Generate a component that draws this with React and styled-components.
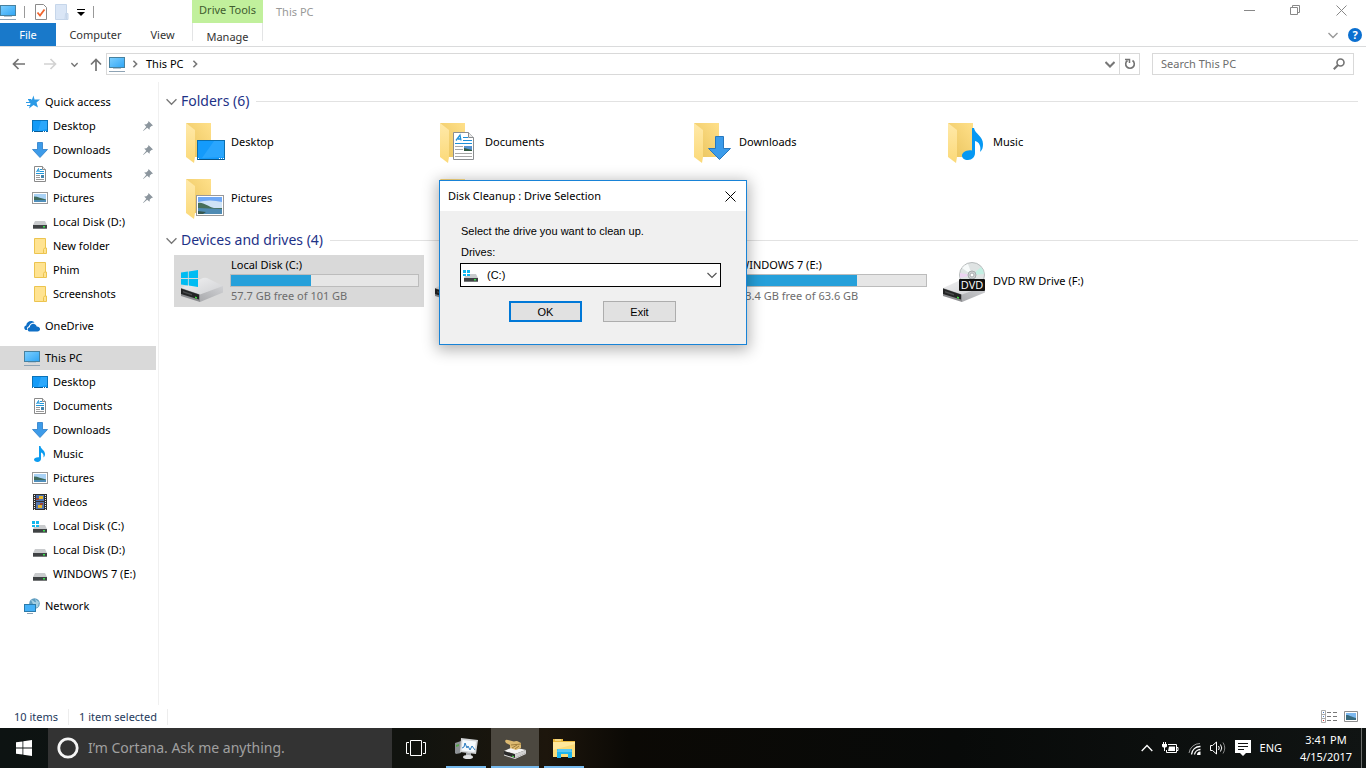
import { useState } from "react";
import styled, { createGlobalStyle } from "styled-components";

const PcIcon = ({ size = 16 }) => (
  <svg width={size} height={size} viewBox="0 0 16 16">
    <defs>
      <linearGradient id="screen" x1="0" y1="0" x2="1" y2="1">
        <stop offset="0" stopColor="#7ed0ff" />
        <stop offset="1" stopColor="#2fa5f5" />
      </linearGradient>
    </defs>
    <rect x="0.5" y="1.5" width="15" height="10" fill="url(#screen)" stroke="#47819f" />
    <path d="M4 13h8v-1H4z" fill="#b5c5d2" />
    <path d="M0 15.5h16" stroke="#8ea3b4" />
  </svg>
);

const DesktopIcon = () => (
  <svg width="16" height="16" viewBox="0 0 16 16">
    <rect x="0.5" y="2.5" width="15" height="11" fill="#139bf8" stroke="#0a72b8" />
    <path d="M9 3h6v8L6 13z" fill="#3cb0ff" opacity="0.6" />
    <path d="M1 13.5h14" stroke="#075a94" />
    <path d="M1 13.5h1M11 13.5h1M13 13.5h1" stroke="#fff" />
  </svg>
);

const DownloadIcon = () => (
  <svg width="16" height="16" viewBox="0 0 16 16">
    <path d="M5.5.5h5v7h5L8 15.5.5 7.5h5z" fill="#3d9be9" stroke="#2b7cc7" strokeWidth="0.8" />
  </svg>
);

const DocumentIcon = () => (
  <svg width="16" height="16" viewBox="0 0 16 16">
    <path d="M2.5.5h8l3 3v12h-11z" fill="#fff" stroke="#8a8a8a" />
    <path d="M10.5.5v3h3" fill="#eee" stroke="#8a8a8a" />
    <path d="M4.500 6l2-3.500.8 3.500M5 5h2M8 3.5h2M8 5.5h4M4 7.5h8" stroke="#2196d8" fill="none" />
    <path d="M4 9.5h4M4 11.5h4M4 13.5h8" stroke="#999" />
    <rect x="9" y="9" width="3" height="3" fill="#4585ac" />
  </svg>
);

const PictureIcon = () => (
  <svg width="16" height="16" viewBox="0 0 16 16">
    <rect x="0.5" y="2.5" width="15" height="11" fill="#fff" stroke="#999" />
    <path d="M2 4h12v8H2z" fill="#a9d2f5" />
    <path d="M2 6.500c4 0 7 2 12 3v1H2z" fill="#3e6a5c" />
    <path d="M2 10h12v2H2z" fill="#4f8fba" />
  </svg>
);

const MusicIcon = () => (
  <svg width="16" height="16" viewBox="0 0 16 16">
    <path d="M7 0h1.500c0 3 4.500 4 4.500 8 0 1.500-.5 2.500-1.500 3.500.6-3-1-4.500-2.500-5V13c0 1.500-1.500 3-3.500 3S2 15 2 13.500 4 11 7 11.200z" fill="#0c9cf0" />
  </svg>
);

const VideoIcon = () => (
  <svg width="16" height="16" viewBox="0 0 16 16">
    <path d="M1 0h14v16H1z" fill="#303030" />
    <path d="M2.5 1v15M13.5 1v15" stroke="#eee" strokeDasharray="1 1" />
    <path d="M4 1h8v6H4z" fill="#496fb0" />
    <path d="M4 8h8v7H4z" fill="#5375ae" />
    <path d="M7 2h4v3H7zM6 11h4v3H6z" fill="#e6b62b" />
    <path d="M4 4h3v2H4zM8 9h3v2H8z" fill="#97443b" />
  </svg>
);

const FolderIcon = () => (
  <svg width="16" height="16" viewBox="0 0 16 16">
    <path d="M2.5.5h11v15h-11z" fill="#ffe391" stroke="#ecc44f" />
    <path d="M12.5 10h2v5.5h-3v-4z" fill="#ffe391" stroke="#ecc44f" />
  </svg>
);

const WindowsMark = ({ x, y, size, color = "#00bcf2" }) => (
  <svg x={x} y={y} width={size} height={size} viewBox="0 0 16 16">
    <path
      d="M0 2.3 6.5 1.4V7.6H0zM7.3 1.3 16 0v7.6H7.3zM0 8.4h6.5v6.2L0 13.7zM7.3 8.4H16V16l-8.7-1.3z"
      fill={color}
    />
  </svg>
);

const DriveIcon = ({ system }) => (
  <svg width="16" height="16" viewBox="0 0 16 16">
    <path d="M3 7h10l2 4H1z" fill="#c9cbcd" />
    <path d="M1 11h14v4H1z" fill="#3f4244" />
    <path d="M1 14.5h14" stroke="#77797a" />
    <path d="M11 12h2v1.5h-2z" fill="#39e04c" />
    {system && (
      <>
        <path d="M0 2h7v5l-1 2H0z" fill="#fff" />
        <path d="M0 3h3v3H0zM4 3h3v3H4zM0 7h3v2H0zM4 7h3v2H4z" fill="#12b7ee" />
      </>
    )}
  </svg>
);

const StarIcon = () => (
  <svg width="16" height="16" viewBox="0 0 16 16">
    <path d="M9.500 1.500l1 4H16l-3.500 3 1.500 5-4.500-2.500L5 14.500l1.500-5L4 5.500h4z" fill="#2b9ae6" />
    <path d="M4 5.500h3M2 8.500h5M3 11.500h3" stroke="#2b9ae6" />
  </svg>
);

const CloudIcon = () => (
  <svg width="16" height="16" viewBox="0 0 16 16">
    <path d="M1.5 12C-.5 10.5 0 8 2.2 7.5 2.5 3 8 1.500 10.500 4.500 7.500 4.500 5.500 6 4.8 8.2 3 8.800 2.600 10.600 3.500 12z" fill="#0f6fc6" />
    <path d="M6 13.5c-3 0-3-4-.2-4.300C6 5 11.500 4.500 12.700 8.500c4.300 0 4.300 5 .8 5z" fill="#0f6fc6" />
  </svg>
);

const NetworkIcon = () => (
  <svg width="16" height="16" viewBox="0 0 16 16">
    <circle cx="10.5" cy="5.5" r="5.3" fill="#5f9dc0" />
    <path d="M7 2c3 0 3 3 5 2l-1-3 4 3-1 5-3 1" fill="#a5cfe2" />
    <rect x="0.5" y="6.5" width="11" height="7" fill="#45b1f8" stroke="#2b7aa9" />
    <path d="M3 15.5h6" stroke="#8ea3b4" />
  </svg>
);

const PinIcon = () => (
  <svg width="10" height="10" viewBox="0 0 10 10">
    <path d="M5.500 0 10 4.500 8.500 5 6.800 6.500 6.500 8.800 4.200 6.700.3 10 0 9.700l3.300-4L1.200 3.500l2.300-.3L5.200 1.500z" fill="#8c969e" />
  </svg>
);

const Chevron = ({ size = 10, color = "#777", width = 1.4, dir = "down" }) => (
  <svg width={size} height={size} viewBox="0 0 10 10">
    <path
      d={{ down: "M.5 3 5 7.5 9.500 3", right: "M3 1l4 4-4 4" }[dir]}
      fill="none"
      stroke={color}
      strokeWidth={width}
    />
  </svg>
);

const BigFolder = ({ children }) => (
  <svg width="48" height="48" viewBox="0 0 48 48">
    <defs>
      <linearGradient id="back" x1="0" y1="1" x2="1" y2="0">
        <stop offset="0" stopColor="#e9c35c" />
        <stop offset="1" stopColor="#ffe08a" />
      </linearGradient>
      <linearGradient id="flap" x1="0" y1="0" x2="0" y2="1">
        <stop offset="0" stopColor="#ffe9a9" />
        <stop offset="1" stopColor="#fbd978" />
      </linearGradient>
    </defs>
    <path d="M8 5h25v34H17z" fill="url(#back)" />
    <path d="M8 5l9 7v27l-1 6-8-6z" fill="url(#flap)" />
    {children}
  </svg>
);

const BigDesktop = () => (
  <BigFolder>
    <rect x="19.5" y="22.5" width="27" height="19" fill="#149bfb" stroke="#0b6fae" />
    <path d="M36 23h10v16L24 40z" fill="#38adff" opacity="0.6" />
    <path d="M20 41.5h26" stroke="#07568b" />
    <path d="M20 40.5h1M41 40.5h1M43 40.5h1M45 40.5h1" stroke="#fff" />
  </BigFolder>
);

const BigDocument = () => (
  <BigFolder>
    <path d="M21.5 14.5h15l5 5v22h-20z" fill="#fff" stroke="#8a8d90" />
    <path d="M36.5 14.5v5h5" fill="#e8e8e8" stroke="#8a8d90" />
    <path d="M24 22.5l4-5.500 1 5.500M26 21h3" stroke="#1e90d8" strokeWidth="1.300" fill="none" />
    <path d="M31 19.5h5M31 22.500h9M23 25.5h17" stroke="#1e90d8" fill="none" />
    <path d="M23 28.5h8M23 31.5h8M23 35.5h17M23 38.5h17" stroke="#a8a8a8" />
    <path d="M32 28h8v5h-8z" fill="#5593ce" />
    <path d="M32 30l8 2v1h-8z" fill="#31593e" />
  </BigFolder>
);

const BigDownload = () => (
  <BigFolder>
    <path d="M29.5 18.5h8v12h7L33.5 41.5 22.5 30.5h7z" fill="#3b9bea" stroke="#2878be" />
  </BigFolder>
);

const BigMusic = () => (
  <BigFolder>
    <path d="M32 10h2c1 6 9 8 9 16 0 3-.5 6-3 8 1.500-6-1-10-5-11v12c0 4-3 7-7 7s-6-2-6-4.500 4-6 10-5z" fill="#0698f3" />
  </BigFolder>
);

const BigPicture = () => (
  <BigFolder>
    <rect x="18.5" y="21.5" width="27" height="20" fill="#fff" stroke="#999" />
    <path d="M20 23h24v17H20z" fill="#6fa8f5" />
    <path d="M20 28q12-3 24 0v6H20z" fill="#cfe4f7" />
    <path d="M20 29c6-1 10 4 16 5h8v1H20z" fill="#47705a" />
    <path d="M20 34l24 1v5H20z" fill="#4f8bb3" />
    <path d="M20 37l8 1-3 2h-5z" fill="#35584f" />
  </BigFolder>
);

const BigVideo = () => (
  <BigFolder>
    <path d="M22 15h20v27H22z" fill="#303030" />
    <path d="M26 17h12v11H26zM26 30h12v10H26z" fill="#5375ae" />
  </BigFolder>
);

const BigDrive = ({ system, dvd }) => (
  <svg width="48" height="48" viewBox="0 0 48 48">
    <defs>
      <linearGradient id="lid" x1="0" y1="0" x2="1" y2="1">
        <stop offset="0" stopColor="#f2f2f3" />
        <stop offset="1" stopColor="#cfd0d3" />
      </linearGradient>
      <linearGradient id="side" x1="0" y1="1" x2="1" y2="0">
        <stop offset="0" stopColor="#a9aaad" />
        <stop offset="1" stopColor="#d0d1d4" />
      </linearGradient>
    </defs>
    <path d="M3 31l22-10q2-.5 4 0l16 8-23 9z" fill="url(#lid)" />
    <path d="M22 37.500L45 29v6.500L22 45z" fill="url(#side)" />
    <path d="M3 31l19 6.500V45L3 39z" fill="#8b8c8f" />
    <path d="M3 31.500l18 6v5L3 37z" fill="#232425" />
    <path d="M5 34l9 3v1.500l-9-3z" fill="#4a4b4d" />
    <path d="M17 39.500l2 .7v1.600l-2-.7z" fill="#3fe23f" />
    {system && <WindowsMark x="3" y="13" size="17" />}
    {dvd && (
      <>
        <circle cx="32" cy="18" r="12.5" fill="#dfe3e3" stroke="#b7bbbc" />
        <path d="M32 18L22 11a12 12 0 0 1 6-4z" fill="#f7fafa" />
        <path d="M32 18l9-8a12 12 0 0 1 3 7z" fill="#c3efe2" />
        <path d="M32 18l-12-2v5z" fill="#edd3f1" />
        <circle cx="32" cy="18" r="4" fill="#d0d3d4" stroke="#a7abad" />
        <circle cx="32" cy="18" r="2" fill="#fff" stroke="#a7abad" />
        <rect x="19" y="22" width="26" height="12" rx="1" fill="#111" />
        <text x="32" y="32" textAnchor="middle" fontFamily="Open Sans, sans-serif" fontSize="11" fill="#fff">
          DVD
        </text>
      </>
    )}
  </svg>
);

const quickAccess = [
  { name: "Desktop", icon: <DesktopIcon />, pinned: true },
  { name: "Downloads", icon: <DownloadIcon />, pinned: true },
  { name: "Documents", icon: <DocumentIcon />, pinned: true },
  { name: "Pictures", icon: <PictureIcon />, pinned: true },
  { name: "Local Disk (D:)", icon: <DriveIcon /> },
  { name: "New folder", icon: <FolderIcon /> },
  { name: "Phim", icon: <FolderIcon /> },
  { name: "Screenshots", icon: <FolderIcon /> },
];

const thisPc = [
  { name: "Desktop", icon: <DesktopIcon /> },
  { name: "Documents", icon: <DocumentIcon /> },
  { name: "Downloads", icon: <DownloadIcon /> },
  { name: "Music", icon: <MusicIcon /> },
  { name: "Pictures", icon: <PictureIcon /> },
  { name: "Videos", icon: <VideoIcon /> },
  { name: "Local Disk (C:)", icon: <DriveIcon system /> },
  { name: "Local Disk (D:)", icon: <DriveIcon /> },
  { name: "WINDOWS 7 (E:)", icon: <DriveIcon /> },
];

const tree = [
  { name: "Quick access", icon: <StarIcon />, items: quickAccess },
  { name: "OneDrive", icon: <CloudIcon />, items: [] },
  { name: "This PC", icon: <PcIcon />, items: thisPc, selected: true },
  { name: "Network", icon: <NetworkIcon />, items: [] },
];

const folders = [
  { name: "Desktop", icon: <BigDesktop /> },
  { name: "Documents", icon: <BigDocument /> },
  { name: "Downloads", icon: <BigDownload /> },
  { name: "Music", icon: <BigMusic /> },
  { name: "Pictures", icon: <BigPicture /> },
  { name: "Videos", icon: <BigVideo /> },
];

const drives = [
  { name: "Local Disk (C:)", icon: <BigDrive system />, used: 43, free: "57.7 GB free of 101 GB" },
  { name: "Local Disk (D:)", icon: <BigDrive />, used: 40, free: "80.2 GB free of 133 GB" },
  { name: "WINDOWS 7 (E:)", icon: <BigDrive />, used: 63, free: "23.4 GB free of 63.6 GB" },
  { name: "DVD RW Drive (F:)", icon: <BigDrive dvd /> },
];

const TitleBar = () => (
  <TitleRow>
    <QuickBar>
      <PcIcon />
      <Divider />
      <PlainButton aria-label="Properties">
        <svg width="12" height="16" viewBox="0 0 12 16">
          <path d="M.5.5h8l3 3v12H.5z" fill="#fff" stroke="#8b8b8b" />
          <path d="M2.5 8.5l2.5 3 4.5-6" fill="none" stroke="#f0642d" strokeWidth="1.8" />
        </svg>
      </PlainButton>
      <PlainButton aria-label="New folder">
        <svg width="14" height="16" viewBox="0 0 14 16">
          <path d="M.5.5h11v15H.5zM10.5 9.5h2.500v6h-3z" fill="#dae6f6" stroke="#c6d6ea" />
        </svg>
      </PlainButton>
      <PlainButton aria-label="Customize toolbar">
        <svg width="8" height="8" viewBox="0 0 8 8">
          <path d="M0 1.5h8" stroke="#000" />
          <path d="M0 4h8L4 8z" fill="#000" />
        </svg>
      </PlainButton>
      <Divider />
    </QuickBar>
    <ToolsLabel>Drive Tools</ToolsLabel>
    <WindowTitle>This PC</WindowTitle>
    <WindowButton aria-label="Minimize">
      <svg width="11" height="11">
        <path d="M0 5.5h11" stroke="#888" />
      </svg>
    </WindowButton>
    <WindowButton aria-label="Restore">
      <svg width="11" height="11">
        <path d="M.5 2.5h7v7h-7zM2.5 2.5v-2h7v7h-2" fill="none" stroke="#888" />
      </svg>
    </WindowButton>
    <WindowButton aria-label="Close">
      <svg width="11" height="11">
        <path d="M.5.5l10 10M10.5.5l-10 10" stroke="#888" />
      </svg>
    </WindowButton>
  </TitleRow>
);

const Ribbon = () => (
  <RibbonRow>
    <FileTab>File</FileTab>
    <Tab $width={79}>Computer</Tab>
    <Tab $width={55}>View</Tab>
    <ManageTab $width={71}>Manage</ManageTab>
    <RibbonEnd>
      <PlainButton aria-label="Expand the Ribbon">
        <Chevron color="#999" />
      </PlainButton>
      <HelpButton aria-label="Help">?</HelpButton>
    </RibbonEnd>
  </RibbonRow>
);

const AddressBar = () => (
  <AddressRow>
    <NavButton $width={37} aria-label="Back">
      <svg width="13" height="12" viewBox="0 0 13 12">
        <path d="M13 6H1.5M6.5 1l-5 5 5 5" fill="none" stroke="#737373" strokeWidth="1.700" />
      </svg>
    </NavButton>
    <NavButton $width={22} aria-label="Forward">
      <svg width="13" height="12" viewBox="0 0 13 12">
        <path d="M0 6h11.5M6.5 1l5 5-5 5" fill="none" stroke="#d2d2d2" strokeWidth="1.700" />
      </svg>
    </NavButton>
    <NavButton $width={23} aria-label="Recent locations">
      <Chevron size={7} width={2} />
    </NavButton>
    <NavButton $width={16} aria-label="Up">
      <svg width="12" height="13" viewBox="0 0 12 13">
        <path d="M6 13V1.5M1 6.5l5-5 5 5" fill="none" stroke="#737373" strokeWidth="1.700" />
      </svg>
    </NavButton>
    <PathBox>
      <PcIcon />
      <Chevron size={8} width={2} dir="right" />
      <PathLink href="#this-pc">This PC</PathLink>
      <Chevron size={8} width={2} dir="right" />
      <PathEnd>
        <PlainButton aria-label="Previous locations">
          <Chevron width={2} />
        </PlainButton>
        <RefreshButton aria-label="Refresh">
          <svg width="12" height="12" viewBox="0 0 12 12">
            <path d="M8.5 2.500a4.300 4.300 0 1 1-5 0" fill="none" stroke="#737373" strokeWidth="1.600" />
            <path d="M1 1.500h4.500V5" fill="none" stroke="#737373" strokeWidth="1.500" />
          </svg>
        </RefreshButton>
      </PathEnd>
    </PathBox>
    <SearchBox>
      <SearchInput type="text" placeholder="Search This PC" aria-label="Search This PC" />
      <svg width="12" height="12" viewBox="0 0 12 12">
        <circle cx="7.5" cy="4.5" r="3.5" fill="none" stroke="#737373" strokeWidth="1.600" />
        <path d="M5 7L.8 11.200" stroke="#737373" strokeWidth="2" />
      </svg>
    </SearchBox>
  </AddressRow>
);

const Sidebar = () => (
  <SidePane>
    {tree.map((group) => (
      <TreeGroup key={group.name}>
        <TreeItem $selected={group.selected}>
          {group.icon}
          <span>{group.name}</span>
        </TreeItem>
        {group.items.map((item) => (
          <TreeItem key={item.name} $child>
            {item.icon}
            <span>{item.name}</span>
            {item.pinned && (
              <Pin>
                <PinIcon />
              </Pin>
            )}
          </TreeItem>
        ))}
      </TreeGroup>
    ))}
  </SidePane>
);

const Section = ({ title, children }) => (
  <section>
    <SectionHead>
      <Chevron size={11} width={1.2} />
      <SectionTitle>{title}</SectionTitle>
      <SectionLine />
    </SectionHead>
    <TileGrid>{children}</TileGrid>
  </section>
);

const DiskCleanup = () => {
  const [drive, setDrive] = useState("C");
  return (
    <Dialog role="dialog" aria-labelledby="cleanup-title">
      <DialogHead>
        <DialogTitle id="cleanup-title">Disk Cleanup : Drive Selection</DialogTitle>
        <DialogClose aria-label="Close dialog">
          <svg width="11" height="11">
            <path d="M.5.5l10 10M10.5.5l-10 10" stroke="#000" />
          </svg>
        </DialogClose>
      </DialogHead>
      <DialogBody>
        <DialogText>Select the drive you want to clean up.</DialogText>
        <DialogLabel htmlFor="drive">Drives:</DialogLabel>
        <Combo>
          <DriveIcon system />
          <ComboSelect id="drive" value={drive} onChange={(e) => setDrive(e.target.value)}>
            <option value="C">(C:)</option>
            <option value="D">(D:)</option>
            <option value="E">WINDOWS 7 (E:)</option>
          </ComboSelect>
          <Chevron color="#555" width={1.2} />
        </Combo>
        <DialogActions>
          <DialogButton $primary>OK</DialogButton>
          <DialogButton>Exit</DialogButton>
        </DialogActions>
      </DialogBody>
    </Dialog>
  );
};

const StatusBar = () => (
  <StatusRow>
    <StatusText>10 items</StatusText>
    <StatusText>1 item selected</StatusText>
    <ViewButtons>
      <PlainButton aria-label="Details view">
        <svg width="16" height="13" viewBox="0 0 16 13">
          <path d="M.5.5h4v12h-4zM.5 4.5h4M.5 8.5h4" fill="none" stroke="#aaa" />
          <path d="M6 2.5h4M12 2.5h4M6 6.5h4M12 6.5h4M6 10.5h4M12 10.5h4" stroke="#777" />
          <path d="M2 2.5h1M2 6.5h1" stroke="#4a7bc0" />
          <path d="M2 10.5h1" stroke="#c33" />
        </svg>
      </PlainButton>
      <PlainButton aria-label="Large icons view">
        <svg width="14" height="12" viewBox="0 0 14 12">
          <path d="M.5.5h13v10H.5z" fill="#fff" stroke="#8f8f8f" />
          <path d="M2 2h10v7H2z" fill="#7db9f0" />
          <path d="M2 4c4 0 5 2 10 3v2H2z" fill="#376a7d" />
        </svg>
      </PlainButton>
    </ViewButtons>
  </StatusRow>
);

const Taskbar = () => (
  <TaskRow>
    <StartButton aria-label="Start">
      <svg width="16" height="16">
        <WindowsMark x="0" y="0" size="16" color="#fff" />
      </svg>
    </StartButton>
    <Cortana>
      <svg width="22" height="22" viewBox="0 0 22 22">
        <circle cx="11" cy="11" r="9.200" fill="none" stroke="#f5f5f5" strokeWidth="2.800" />
      </svg>
      <CortanaInput type="text" placeholder="I’m Cortana. Ask me anything." aria-label="Cortana" />
    </Cortana>
    <TaskButton aria-label="Task view">
      <svg width="20" height="16" viewBox="0 0 20 16">
        <path d="M4.5.5h11v15h-11zM3 2.500H.5v11H3M17 2.500h2.500v11H17" fill="none" stroke="#fff" />
      </svg>
    </TaskButton>
    <Apps>
      <AppButton aria-label="Resource Monitor">
        <svg width="24" height="24" viewBox="0 0 24 24">
          <path d="M1 7l6-2v12l-5 1-1-1z" fill="#8d9195" />
          <path d="M2 9l3-1v2L2 11z" fill="#55a447" />
          <path d="M7 2l17 2-2 14-16-2z" fill="#d2d4d6" />
          <path d="M8.500 4l13.500 1.500-1.500 10.500-13-1.500z" fill="#f5fafd" />
          <path d="M8 12l2-1 1-4 2 5 1-2 2 4 2-4 3 4" fill="none" stroke="#2b7cc0" />
          <path d="M12 17h5v4h-5z" fill="#a9acaf" />
          <ellipse cx="14" cy="21" rx="5" ry="2" fill="#dfe0e1" />
        </svg>
      </AppButton>
      <AppButton $active aria-label="Disk Cleanup">
        <svg width="24" height="24" viewBox="0 0 24 24">
          <path d="M1 15l9-4 13 3-11 4z" fill="#f4f4f4" />
          <path d="M12 18l11-4v3l-11 5z" fill="#d0d0d0" />
          <path d="M1 15l11 3.500V22L1 18.500z" fill="#2b2b2b" />
          <path d="M1 18.500L12 22l11-5v1l-11 5-11-3.500z" fill="#ddd" />
          <path d="M2 5q1-2 3-1l6 1.500q3-1 5 .5l2 1v5l-5 2-6-2V9L3 7z" fill="#dcb970" />
          <path d="M8 9l10-1M9 12l5-3M12 13l4-3" stroke="#a07d3a" fill="none" />
          <path d="M9 20l2 .7" stroke="#3fe23f" />
        </svg>
      </AppButton>
      <AppButton aria-label="File Explorer">
        <svg width="24" height="24" viewBox="0 0 24 24">
          <path d="M1 3h10v2h12v5H1z" fill="#e9b93f" />
          <path d="M3 3.500h6v1H3z" fill="#fff3c4" />
          <path d="M1 6h22v15H1z" fill="#fbdc78" />
          <path d="M1 6h22v2L1 14z" fill="#ffe89b" />
          <path d="M5 22v-8q0-1 1-1h13q1 0 1 1v8h-4v-4H9v4z" fill="#1fb6ee" />
          <path d="M6 13h13l1 3H5z" fill="#57c9f5" />
        </svg>
      </AppButton>
    </Apps>
    <Tray>
      <TrayButton aria-label="Show hidden icons">
        <svg width="12" height="8" viewBox="0 0 12 8">
          <path d="M.7 7L6 1.5 11.3 7" fill="none" stroke="#fff" strokeWidth="1.300" />
        </svg>
      </TrayButton>
      <TrayButton aria-label="Battery">
        <svg width="17" height="12" viewBox="0 0 17 12">
          <path d="M6 2.500h8.500v8H4.500V8M15 5.5h1v3h-1" fill="none" stroke="#fff" />
          <path d="M7 4.500h6V9H6z" fill="#fff" />
          <path d="M0 2h5v2c0 2-5 2-5 0zM1 0h1v2H1zM3 0h1v2H3zM2 5h1v4H2z" fill="#fff" />
        </svg>
      </TrayButton>
      <TrayButton aria-label="Network">
        <svg width="13" height="13" viewBox="0 0 13 13">
          <path d="M1 11A11 11 0 0 1 12 1.500" fill="none" stroke="#999" />
          <path d="M3.500 12.500a8.500 8.500 0 0 1 9-8M6.500 12.500a6 6 0 0 1 6-5" fill="none" stroke="#fff" strokeWidth="1.300" />
          <path d="M9 13a3.500 3.500 0 0 1 3.500-3.500V13z" fill="#fff" />
        </svg>
      </TrayButton>
      <TrayButton aria-label="Volume">
        <svg width="16" height="14" viewBox="0 0 16 14">
          <path d="M.5 4.5h2l4-3.500v12l-4-3.500h-2z" fill="none" stroke="#fff" />
          <path d="M8.5 5q1.500 2 0 4M10.500 3.500q2.500 3.500 0 7" fill="none" stroke="#fff" />
          <path d="M13 1.5q3.500 5.500 0 11" fill="none" stroke="#888" />
        </svg>
      </TrayButton>
      <TrayButton aria-label="Action center">
        <svg width="16" height="16" viewBox="0 0 16 16">
          <path d="M0 0h16v13h-5l-3 3-3-3H0z" fill="#fff" />
          <path d="M3 3.5h10M3 6.5h10M3 9.5h6" stroke="#111" />
        </svg>
      </TrayButton>
      <TrayButton>ENG</TrayButton>
      <Clock>
        <span>3:41 PM</span>
        <span>4/15/2017</span>
      </Clock>
    </Tray>
  </TaskRow>
);

const App = () => {
  const [selected, setSelected] = useState("Local Disk (C:)");
  return (
    <Screen>
      <GlobalStyle />
      <TitleBar />
      <Ribbon />
      <AddressBar />
      <Content>
        <Sidebar />
        <Main>
          <Section title="Folders (6)">
            {folders.map((folder) => (
              <Tile
                key={folder.name}
                $selected={selected === folder.name}
                onClick={() => setSelected(folder.name)}
              >
                {folder.icon}
                <TileText>{folder.name}</TileText>
              </Tile>
            ))}
          </Section>
          <Section title="Devices and drives (4)">
            {drives.map((drive) => (
              <Tile
                key={drive.name}
                $selected={selected === drive.name}
                onClick={() => setSelected(drive.name)}
              >
                {drive.icon}
                <TileText>
                  <span>{drive.name}</span>
                  {drive.free && (
                    <>
                      <Meter>
                        <MeterFill style={{ width: `${drive.used}%` }} />
                      </Meter>
                      <FreeSpace>{drive.free}</FreeSpace>
                    </>
                  )}
                </TileText>
              </Tile>
            ))}
          </Section>
        </Main>
      </Content>
      <StatusBar />
      <Taskbar />
      <DiskCleanup />
    </Screen>
  );
};

const GlobalStyle = createGlobalStyle`
* {
  box-sizing: border-box;
}
body {
  margin: 0;
  font-family: "Noto Sans", "Open Sans", sans-serif;
  font-size: 11px;
  line-height: 16px;
  color: #000;
  background-color: white;
}
button, input, select {
  font: inherit;
  color: inherit;
  padding: 0;
  border: none;
  background: none;
}
svg {
  display: block;
  flex-shrink: 0;
}
`;

const Screen = styled.div`
position: relative;
display: flex;
flex-direction: column;
min-height: 100vh;
`;

const PlainButton = styled.button`
display: flex;
align-items: center;
`;

const TitleRow = styled.header`
display: flex;
height: 23px;
padding-right: 2px;
`;

const QuickBar = styled.div`
display: flex;
align-items: center;
gap: 8px;
width: 192px;
`;

const Divider = styled.span`
width: 1px;
height: 12px;
margin-right: 2px;
background-color: #999;
`;

const ToolsLabel = styled.div`
width: 71px;
padding-top: 2px;
text-align: center;
color: #3f5c2e;
background-color: #c1f09c;
`;

const WindowTitle = styled.div`
flex: 1;
padding: 4px 13px;
color: #999;
`;

const WindowButton = styled.button`
display: flex;
align-items: center;
justify-content: center;
width: 46px;
height: 21px;
`;

const RibbonRow = styled.nav`
display: flex;
height: 24px;
border-bottom: 1px solid #dadbdc;
`;

const Tab = styled.button`
width: ${(props) => props.$width}px;
color: #333;
`;

const FileTab = styled.button`
width: 56px;
color: white;
background-color: #1979ca;
`;

const ManageTab = styled(Tab)`
height: 18px;
margin-left: 2px;
padding-top: 6px;
border-left: 1px solid #e3e4e5;
border-right: 1px solid #e3e4e5;
`;

const RibbonEnd = styled.div`
display: flex;
align-items: center;
gap: 10px;
margin-left: auto;
padding-right: 4px;
`;

const HelpButton = styled.button`
width: 14px;
height: 14px;
border-radius: 50%;
font-size: 11px;
font-weight: 700;
line-height: 14px;
color: white;
background-color: #0a6fd0;
`;

const AddressRow = styled.div`
display: flex;
align-items: center;
padding: 6px 12px 7px 0;
`;

const NavButton = styled.button`
display: flex;
align-items: center;
justify-content: center;
width: ${(props) => props.$width}px;
height: 22px;
margin-right: 2px;
`;

const PathBox = styled.div`
display: flex;
align-items: center;
flex: 1;
gap: 6px;
height: 22px;
padding-left: 2px;
border: 1px solid #d9d9d9;
`;

const PathLink = styled.a`
margin: 0 1px;
color: #000;
text-decoration: none;
`;

const PathEnd = styled.div`
display: flex;
gap: 4px;
height: 20px;
margin-left: auto;
`;

const RefreshButton = styled.button`
display: flex;
align-items: center;
justify-content: center;
width: 20px;
border-left: 1px solid #d9d9d9;
`;

const SearchBox = styled.div`
display: flex;
align-items: center;
width: 202px;
height: 22px;
margin-left: 12px;
padding: 0 8px;
border: 1px solid #d9d9d9;
`;

const SearchInput = styled.input`
flex: 1;
min-width: 0;
outline: none;
&::placeholder {
  color: #6d6d6d;
  opacity: 1;
}
`;

const Content = styled.div`
display: flex;
flex: 1;
`;

const SidePane = styled.nav`
display: flex;
flex-direction: column;
gap: 8px;
width: 159px;
padding: 8px 2px 0 0;
border-right: 1px solid #f0f0f0;
`;

const TreeGroup = styled.div`
display: flex;
flex-direction: column;
`;

const TreeItem = styled.button`
display: flex;
align-items: center;
gap: 5px;
height: 24px;
padding-left: ${(props) => (props.$child ? "32px" : "24px")};
padding-right: 3px;
background-color: ${(props) => (props.$selected ? "#d9d9d9" : "transparent")};
white-space: nowrap;
`;

const Pin = styled.span`
margin-left: auto;
`;

const Main = styled.main`
flex: 1;
padding: 4px 8px 0 7px;
`;

const SectionHead = styled.div`
display: flex;
align-items: center;
gap: 4px;
height: 30px;
`;

const SectionTitle = styled.h2`
margin: 0;
font-size: 14px;
font-weight: 400;
line-height: 20px;
color: #1e3287;
`;

const SectionLine = styled.div`
flex: 1;
height: 1px;
margin-left: 3px;
background-color: #e2e2e2;
`;

const TileGrid = styled.div`
display: grid;
grid-template-columns: repeat(auto-fill, 250px);
gap: 4px;
padding: 0 0 1px 8px;
`;

const Tile = styled.button`
display: flex;
align-items: center;
gap: 5px;
height: 52px;
padding: 0 5px 0 4px;
text-align: left;
background-color: ${(props) => (props.$selected ? "#d9d9d9" : "transparent")};
`;

const TileText = styled.div`
display: flex;
flex: 1;
flex-direction: column;
`;

const Meter = styled.div`
height: 13px;
margin: 1px 0 2px -1px;
border: 1px solid #bcbcbc;
background-color: #e6e6e6;
`;

const MeterFill = styled.div`
height: 100%;
background-color: #26a0da;
`;

const FreeSpace = styled.span`
margin-bottom: 2px;
line-height: 14px;
color: #6d6d6d;
`;

const StatusRow = styled.footer`
display: flex;
align-items: center;
height: 23px;
padding: 0 8px 0 4px;
color: #1e395b;
`;

const StatusText = styled.span`
padding: 0 10px;
border-right: 1px solid #ededed;
`;

const ViewButtons = styled.div`
display: flex;
gap: 7px;
margin-left: auto;
`;

const TaskRow = styled.footer`
display: flex;
height: 40px;
color: white;
background: linear-gradient(90deg, #0d1312, #11130f 30%, #1d160c 40%, #0b0905 46%, #080a09 70%, #101413);
`;

const StartButton = styled.button`
display: flex;
align-items: center;
justify-content: center;
width: 48px;
`;

const Cortana = styled.div`
display: flex;
align-items: center;
gap: 9px;
width: 344px;
padding-left: 9px;
background-color: #333;
`;

const CortanaInput = styled.input`
flex: 1;
font-size: 14px;
line-height: 20px;
outline: none;
&::placeholder {
  color: #a0a0a0;
  opacity: 1;
}
`;

const TaskButton = styled(StartButton)``;

const Apps = styled.div`
display: flex;
gap: 5px;
margin-left: 6px;
`;

const AppButton = styled.button`
display: flex;
align-items: center;
justify-content: center;
width: ${(props) => (props.$active ? "48px" : "40px")};
border-top: 2px solid transparent;
border-bottom: 2px solid #76b9ed;
background-color: ${(props) => (props.$active ? "#4c4840" : "transparent")};
`;

const Tray = styled.div`
display: flex;
align-items: center;
gap: 9px;
margin-left: auto;
padding-right: 4px;
`;

const TrayButton = styled.button`
display: flex;
align-items: center;
font-size: 11px;
`;

const Clock = styled.div`
display: flex;
flex-direction: column;
align-items: center;
justify-content: center;
width: 71px;
height: 40px;
border-right: 1px solid #6b6d6c;
font-size: 11px;
line-height: 17px;
`;

const Dialog = styled.div`
position: absolute;
top: 180px;
left: 439px;
width: 308px;
border: 1px solid #1883d7;
background-color: #f0f0f0;
box-shadow: 0 3px 14px 2px rgba(0, 0, 0, 0.3);
`;

const DialogHead = styled.div`
display: flex;
align-items: center;
height: 30px;
padding: 0 10px 0 8px;
background-color: white;
`;

const DialogTitle = styled.h1`
flex: 1;
margin: 0;
font-size: 11px;
font-weight: 400;
`;

const DialogClose = styled(PlainButton)`
height: 28px;
`;

const DialogBody = styled.div`
display: flex;
flex-direction: column;
padding: 12px 25px 22px 20px;
font-family: "Liberation Sans", Arial, sans-serif;
font-size: 11px;
`;

const DialogText = styled.p`
margin: 0 0 5px 1px;
`;

const DialogLabel = styled.label`
margin: 0 0 3px 1px;
`;

const Combo = styled.div`
display: flex;
align-items: center;
height: 24px;
padding: 0 3px 0 2px;
border: 1px solid #000;
background-color: white;
`;

const ComboSelect = styled.select`
flex: 1;
height: 20px;
margin-left: 8px;
appearance: none;
outline: none;
`;

const DialogActions = styled.div`
display: flex;
gap: 21px;
margin-top: 14px;
padding-left: 49px;
`;

const DialogButton = styled.button`
width: 73px;
height: 21px;
border: ${(props) => (props.$primary ? "2px solid #0078d7" : "1px solid #adadad")};
background-color: #e1e1e1;
`;

export default App;
